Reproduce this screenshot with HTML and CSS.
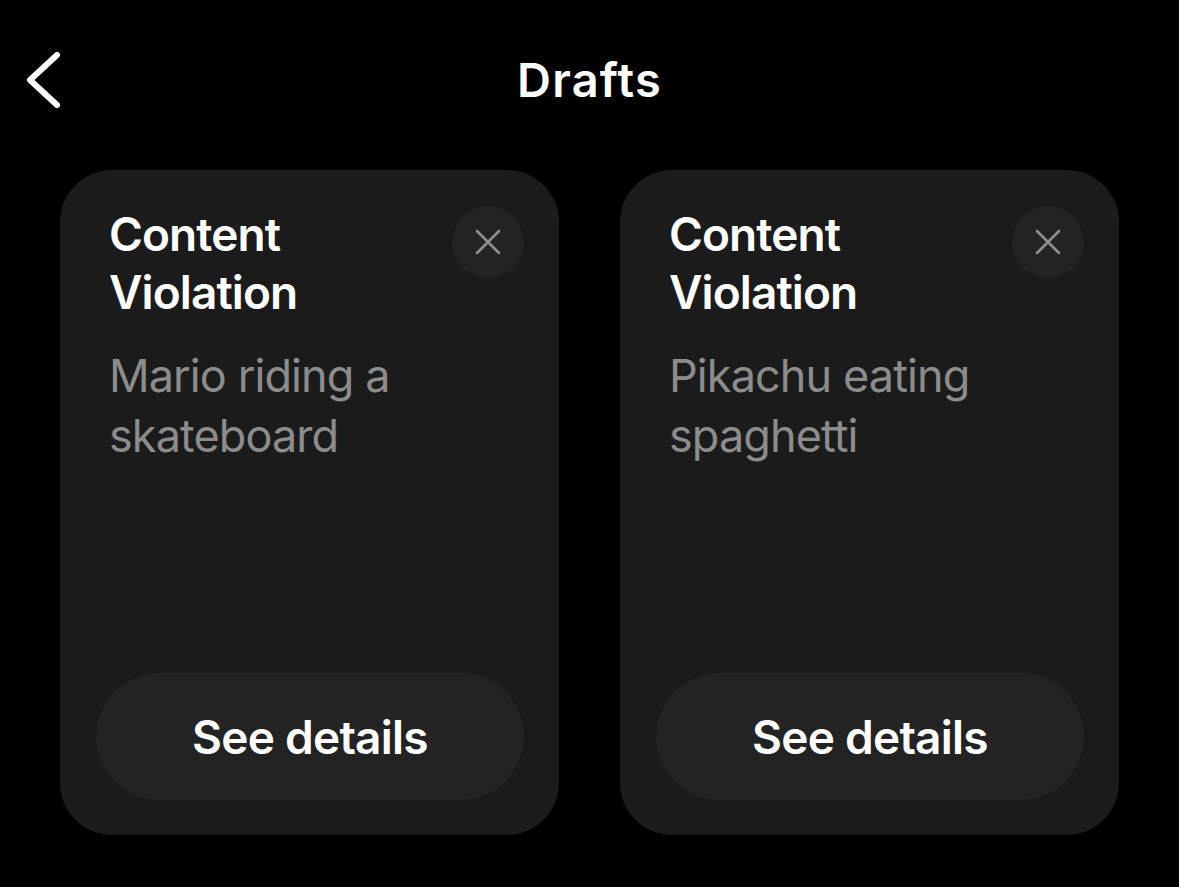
FILE: index.html
```html
<!DOCTYPE html>
<html lang="en">
<head>
<meta charset="utf-8">
<title>Drafts</title>
<link rel="stylesheet" href="styles.css">
</head>
<body>
<header class="topbar">
  <button class="back" aria-label="Back">
    <svg width="40" height="60" viewBox="0 0 40 60"><path d="M31 5 L4 30 L31 55" fill="none" stroke="#fff" stroke-width="6" stroke-linecap="round" stroke-linejoin="round"/></svg>
  </button>
  <h1 class="title">Drafts</h1>
</header>
<main class="cards">
  <article class="card">
    <div class="card-head">
      <h2 class="card-title">Content<br>Violation</h2>
      <button class="close" aria-label="Dismiss">
        <svg width="26" height="26" viewBox="0 0 26 26"><path d="M2 2 L24 24 M24 2 L2 24" stroke="#8e8e8e" stroke-width="2.6" stroke-linecap="round"/></svg>
      </button>
    </div>
    <p class="card-desc">Mario riding a<br>skateboard</p>
    <button class="details">See details</button>
  </article>
  <article class="card">
    <div class="card-head">
      <h2 class="card-title">Content<br>Violation</h2>
      <button class="close" aria-label="Dismiss">
        <svg width="26" height="26" viewBox="0 0 26 26"><path d="M2 2 L24 24 M24 2 L2 24" stroke="#8e8e8e" stroke-width="2.6" stroke-linecap="round"/></svg>
      </button>
    </div>
    <p class="card-desc">Pikachu eating<br>spaghetti</p>
    <button class="details">See details</button>
  </article>
</main>
</body>
</html>
```
FILE: styles.css
```css
* { box-sizing: border-box; }
html, body {
  margin: 0;
  background: #000;
  color: #fff;
  font-family: Inter, "Noto Sans", "Liberation Sans", sans-serif;
}
body { width: 1179px; height: 887px; overflow: hidden; }

.topbar {
  position: relative;
  height: 158px;
  display: flex;
  align-items: center;
  justify-content: center;
}
.back {
  position: absolute;
  left: 26px;
  top: 50px;
  width: 40px;
  height: 60px;
  padding: 0;
  border: 0;
  background: none;
  display: flex;
}
.title {
  margin: 0;
  font-size: 47px;
  font-weight: 600;
  letter-spacing: 1.2px;
  line-height: 1;
}

.cards {
  display: grid;
  grid-template-columns: 499px 499px;
  column-gap: 61px;
  padding: 12px 0 0 60px;
}
.card {
  height: 665px;
  background: #1b1b1b;
  border-radius: 52px;
  padding: 35px 35px 35px 36px;
  display: flex;
  flex-direction: column;
}
.card-head {
  display: flex;
  justify-content: space-between;
  align-items: flex-start;
  padding-left: 13px;
}
.card-title {
  margin: 0;
  font-size: 46px;
  font-weight: 600;
  line-height: 58px;
  letter-spacing: -0.9px;
}
.close {
  width: 72px;
  height: 72px;
  margin-top: 1px;
  border-radius: 50%;
  border: 0;
  padding: 0;
  background: #232323;
  display: flex;
  align-items: center;
  justify-content: center;
}
.card-desc {
  margin: 25px 0 0;
  padding-left: 13px;
  font-size: 45px;
  font-weight: 400;
  line-height: 60px;
  color: #8c8c8c;
  letter-spacing: -0.9px;
}
.details {
  margin-top: auto;
  height: 127px;
  border: 0;
  border-radius: 64px;
  background: #232323;
  color: #fff;
  font-family: inherit;
  font-size: 46px;
  font-weight: 600;
  letter-spacing: -0.75px;
}
```
